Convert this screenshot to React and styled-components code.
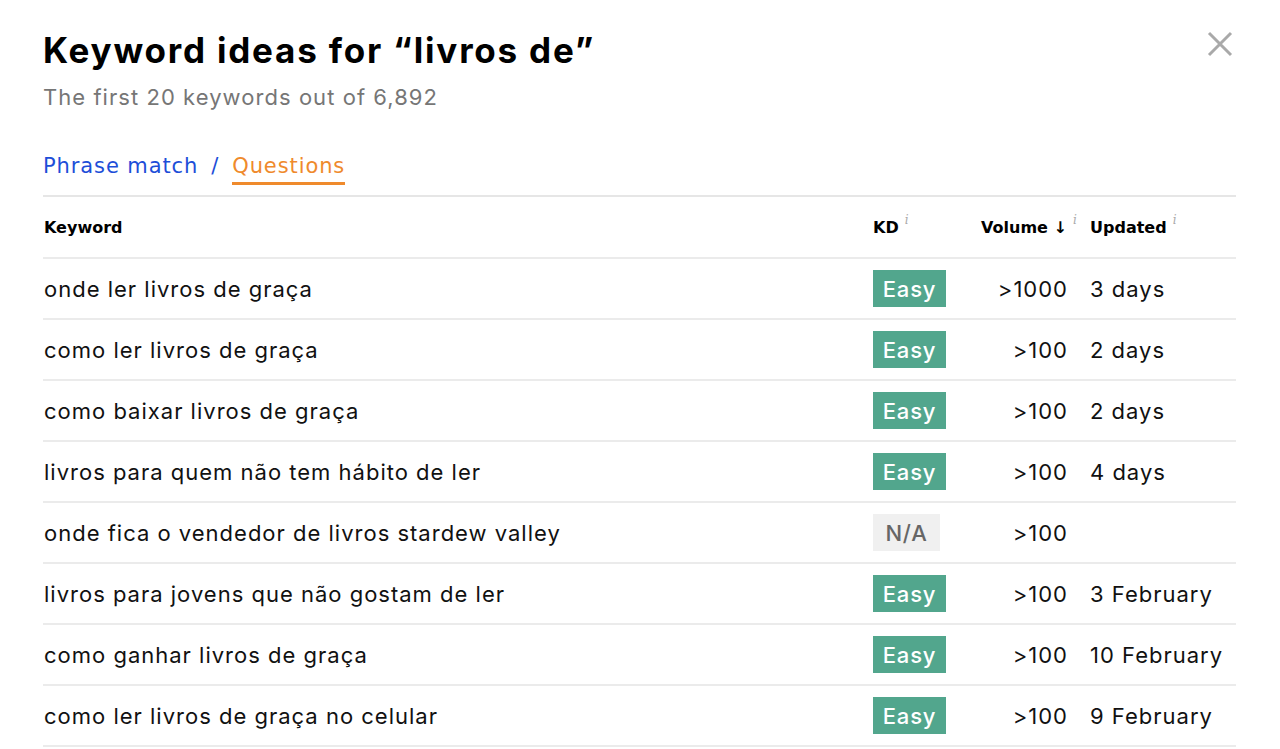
import React from 'react';
import styled, { createGlobalStyle } from 'styled-components';

const GlobalStyle = createGlobalStyle`
  html, body {
    margin: 0;
    padding: 0;
    background: #fff;
  }
  body {
    font-family: Inter, "Noto Sans", sans-serif;
    color: #111;
  }
`;

const rows = [
  { keyword: 'onde ler livros de graça', kd: 'Easy', volume: '>1000', updated: '3 days' },
  { keyword: 'como ler livros de graça', kd: 'Easy', volume: '>100', updated: '2 days' },
  { keyword: 'como baixar livros de graça', kd: 'Easy', volume: '>100', updated: '2 days' },
  { keyword: 'livros para quem não tem hábito de ler', kd: 'Easy', volume: '>100', updated: '4 days' },
  { keyword: 'onde fica o vendedor de livros stardew valley', kd: 'N/A', volume: '>100', updated: '' },
  { keyword: 'livros para jovens que não gostam de ler', kd: 'Easy', volume: '>100', updated: '3 February' },
  { keyword: 'como ganhar livros de graça', kd: 'Easy', volume: '>100', updated: '10 February' },
  { keyword: 'como ler livros de graça no celular', kd: 'Easy', volume: '>100', updated: '9 February' }
];

const Modal = styled.div`
  position: relative;
  padding: 26px 44px 0 43px;
  height: 749px;
  box-sizing: border-box;
  overflow: hidden;
`;

const Title = styled.h1`
  margin: 0;
  font-family: Inter, sans-serif;
  font-weight: 700;
  font-size: 35px;
  line-height: 48px;
  letter-spacing: 1.8px;
  color: #000;
`;

const Subtitle = styled.p`
  margin: 8px 0 0;
  font-size: 22px;
  line-height: 30px;
  letter-spacing: 1.05px;
  color: #767676;
`;

const Close = styled.button`
  position: absolute;
  top: 30px;
  right: 46px;
  width: 28px;
  height: 28px;
  padding: 0;
  border: 0;
  background: none;
  cursor: pointer;
`;

const Tabs = styled.div`
  display: flex;
  align-items: center;
  gap: 13px;
  margin-top: 32px;
  height: 44px;
  padding-bottom: 7px;
  border-bottom: 2px solid #e6e6e6;
  font-family: "DejaVu Sans", Verdana, sans-serif;
  font-size: 21px;
  letter-spacing: 0.9px;
`;

const Tab = styled.span`
  color: ${({ active }) => (active ? '#ef8a2c' : '#1d4ed8')};
  padding-bottom: 4px;
  border-bottom: 3px solid ${({ active }) => (active ? '#ef8a2c' : 'transparent')};
  margin-top: 7px;
`;

const Slash = styled.span`
  color: #1d4ed8;
`;

const Table = styled.div`
  display: grid;
  grid-template-columns: 829px 100px 96px 1fr;
`;

const HeadCell = styled.div`
  display: flex;
  align-items: center;
  height: 60px;
  padding-left: ${({ pad }) => pad || 0}px;
  border-bottom: 2px solid #ebebeb;
  font-family: "DejaVu Sans", Verdana, sans-serif;
  font-weight: 700;
  font-size: 16px;
  color: #000;
  white-space: nowrap;
`;

const Info = styled.i`
  font-family: "DejaVu Serif", serif;
  font-size: 12px;
  color: #aaa;
  margin-left: 6px;
  align-self: flex-start;
  margin-top: 16px;
  font-weight: 400;
`;

const Cell = styled.div`
  display: flex;
  align-items: center;
  justify-content: ${({ right }) => (right ? 'flex-end' : 'flex-start')};
  height: 59px;
  padding-left: ${({ pad }) => pad || 0}px;
  padding-right: ${({ padR }) => padR || 0}px;
  border-bottom: 2px solid #ebebeb;
  font-size: 22px;
  letter-spacing: 1px;
  color: #111;
  white-space: nowrap;
`;

const Badge = styled.span`
  display: inline-flex;
  align-items: center;
  justify-content: center;
  height: 37px;
  width: ${({ na }) => (na ? 67 : 73)}px;
  margin-left: 1px;
  background: ${({ na }) => (na ? '#f0f0f0' : '#52a68d')};
  color: ${({ na }) => (na ? '#666' : '#fff')};
  font-size: 22px;
  font-weight: 500;
  letter-spacing: 0.8px;
`;

const CloseIcon = () => (
  <svg width="28" height="28" viewBox="0 0 28 28">
    <path d="M3 3 L25 25 M25 3 L3 25" stroke="#a9a9a9" strokeWidth="3" />
  </svg>
);

const App = () => (
  <>
    <GlobalStyle />
    <Modal>
      <Title>Keyword ideas for “livros de”</Title>
      <Subtitle>The first 20 keywords out of 6,892</Subtitle>
      <Close aria-label="Close">
        <CloseIcon />
      </Close>
      <Tabs>
        <Tab>Phrase match</Tab>
        <Slash>/</Slash>
        <Tab active>Questions</Tab>
      </Tabs>
      <Table>
        <HeadCell pad={1}>Keyword</HeadCell>
        <HeadCell pad={1}>
          KD<Info>i</Info>
        </HeadCell>
        <HeadCell pad={9}>
          Volume ↓<Info>i</Info>
        </HeadCell>
        <HeadCell pad={22}>
          Updated<Info>i</Info>
        </HeadCell>
        {rows.map((row) => (
          <React.Fragment key={row.keyword}>
            <Cell pad={1}>{row.keyword}</Cell>
            <Cell>
              <Badge na={row.kd === 'N/A'}>{row.kd}</Badge>
            </Cell>
            <Cell right padR={0}>
              {row.volume}
            </Cell>
            <Cell pad={22}>{row.updated}</Cell>
          </React.Fragment>
        ))}
      </Table>
    </Modal>
  </>
);

export default App;
